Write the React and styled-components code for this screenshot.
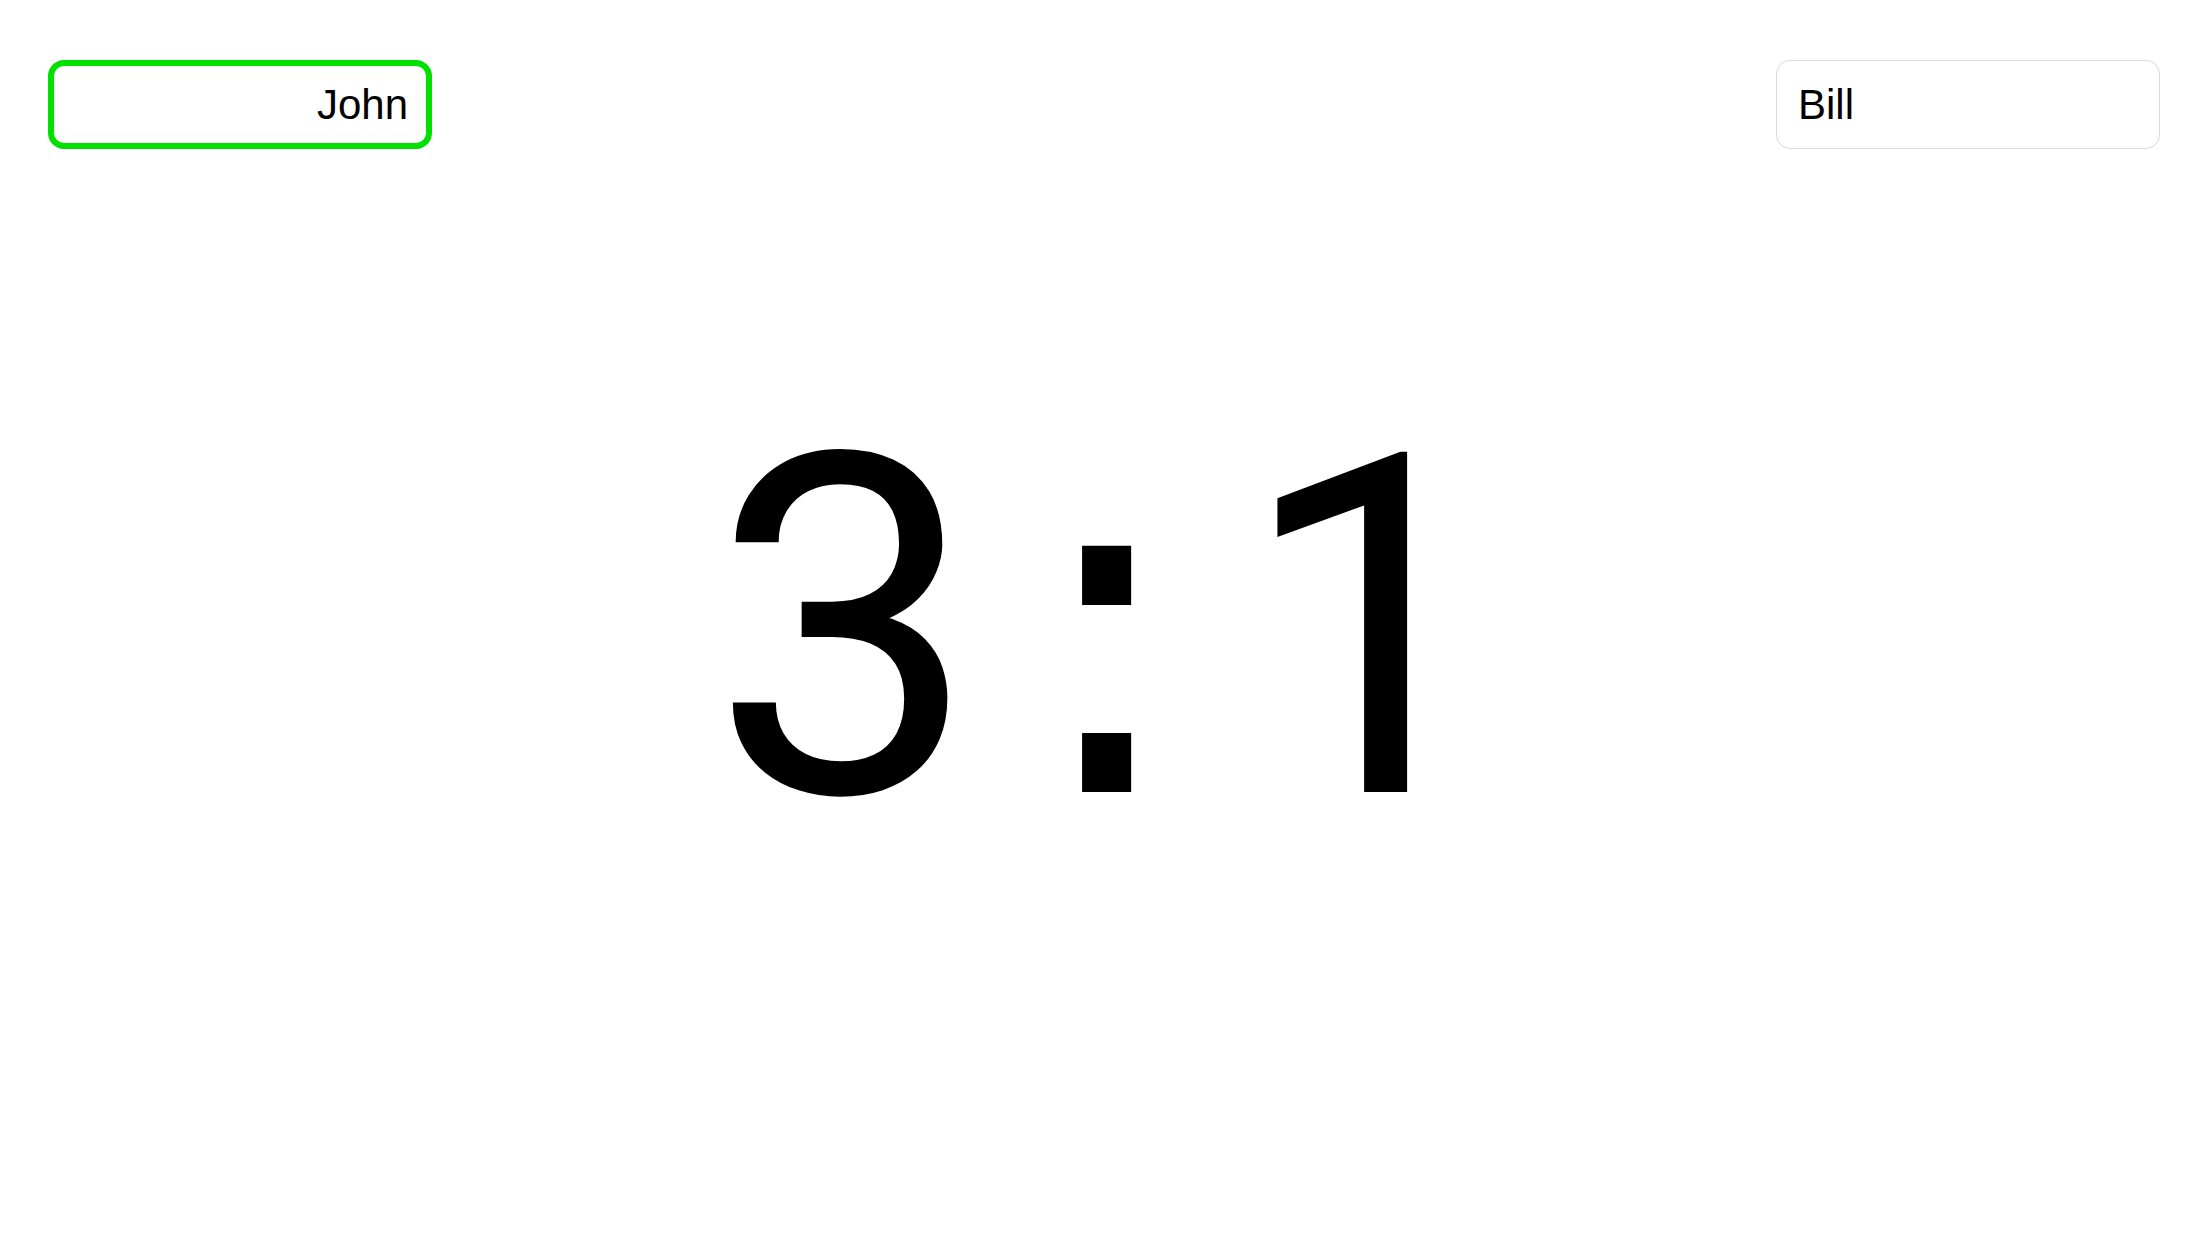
import React from 'react'
import styled, { createGlobalStyle } from 'styled-components'

const GlobalStyle = createGlobalStyle`
	html, body {
		margin: 0;
		padding: 0;
		background: #fff;
	}
	body {
		font-family: "Liberation Sans", Arial, sans-serif;
		color: #000;
	}
`

const Page = styled.div`
	height: 100vh;
	display: grid;
	grid-template-rows: 1fr auto 1fr;
	box-sizing: border-box;
`

const Header = styled.header`
	display: flex;
	justify-content: space-between;
	align-items: flex-start;
	padding: 60px 48px 0;
`

const NameField = styled.div`
	box-sizing: border-box;
	width: 384px;
	height: 89px;
	display: flex;
	align-items: center;
	justify-content: ${props => props.$align === 'right' ? 'flex-end' : 'flex-start'};
	padding: ${props => props.$align === 'right' ? '0 18px 0 22px' : '0 22px 0 21px'};
	border: ${props => props.$active ? '6px solid #00e100' : '1px solid #dadada'};
	border-radius: ${props => props.$active ? '16px' : '14px'};
	font-size: 42px;
	line-height: 1;
	background: #fff;
`

const Score = styled.main`
	display: flex;
	justify-content: center;
	align-items: baseline;
	padding: 14px 0 0 8px;
	font-size: 476px;
	line-height: 1;
`

const Digit = styled.span`
	display: block;
	font-family: Roboto, "Liberation Sans", sans-serif;
`

const Colon = styled.span`
	display: block;
	margin: 0 51px 0 48px;
	font-family: "DejaVu Sans", "Liberation Sans", sans-serif;
`

export default function App() {
	return (
		<>
			<GlobalStyle />
			<Page>
				<Header>
					<NameField $active $align="right">John</NameField>
					<NameField $align="left">Bill</NameField>
				</Header>
				<Score>
					<Digit>3</Digit>
					<Colon>:</Colon>
					<Digit>1</Digit>
				</Score>
				<div />
			</Page>
		</>
	)
}
